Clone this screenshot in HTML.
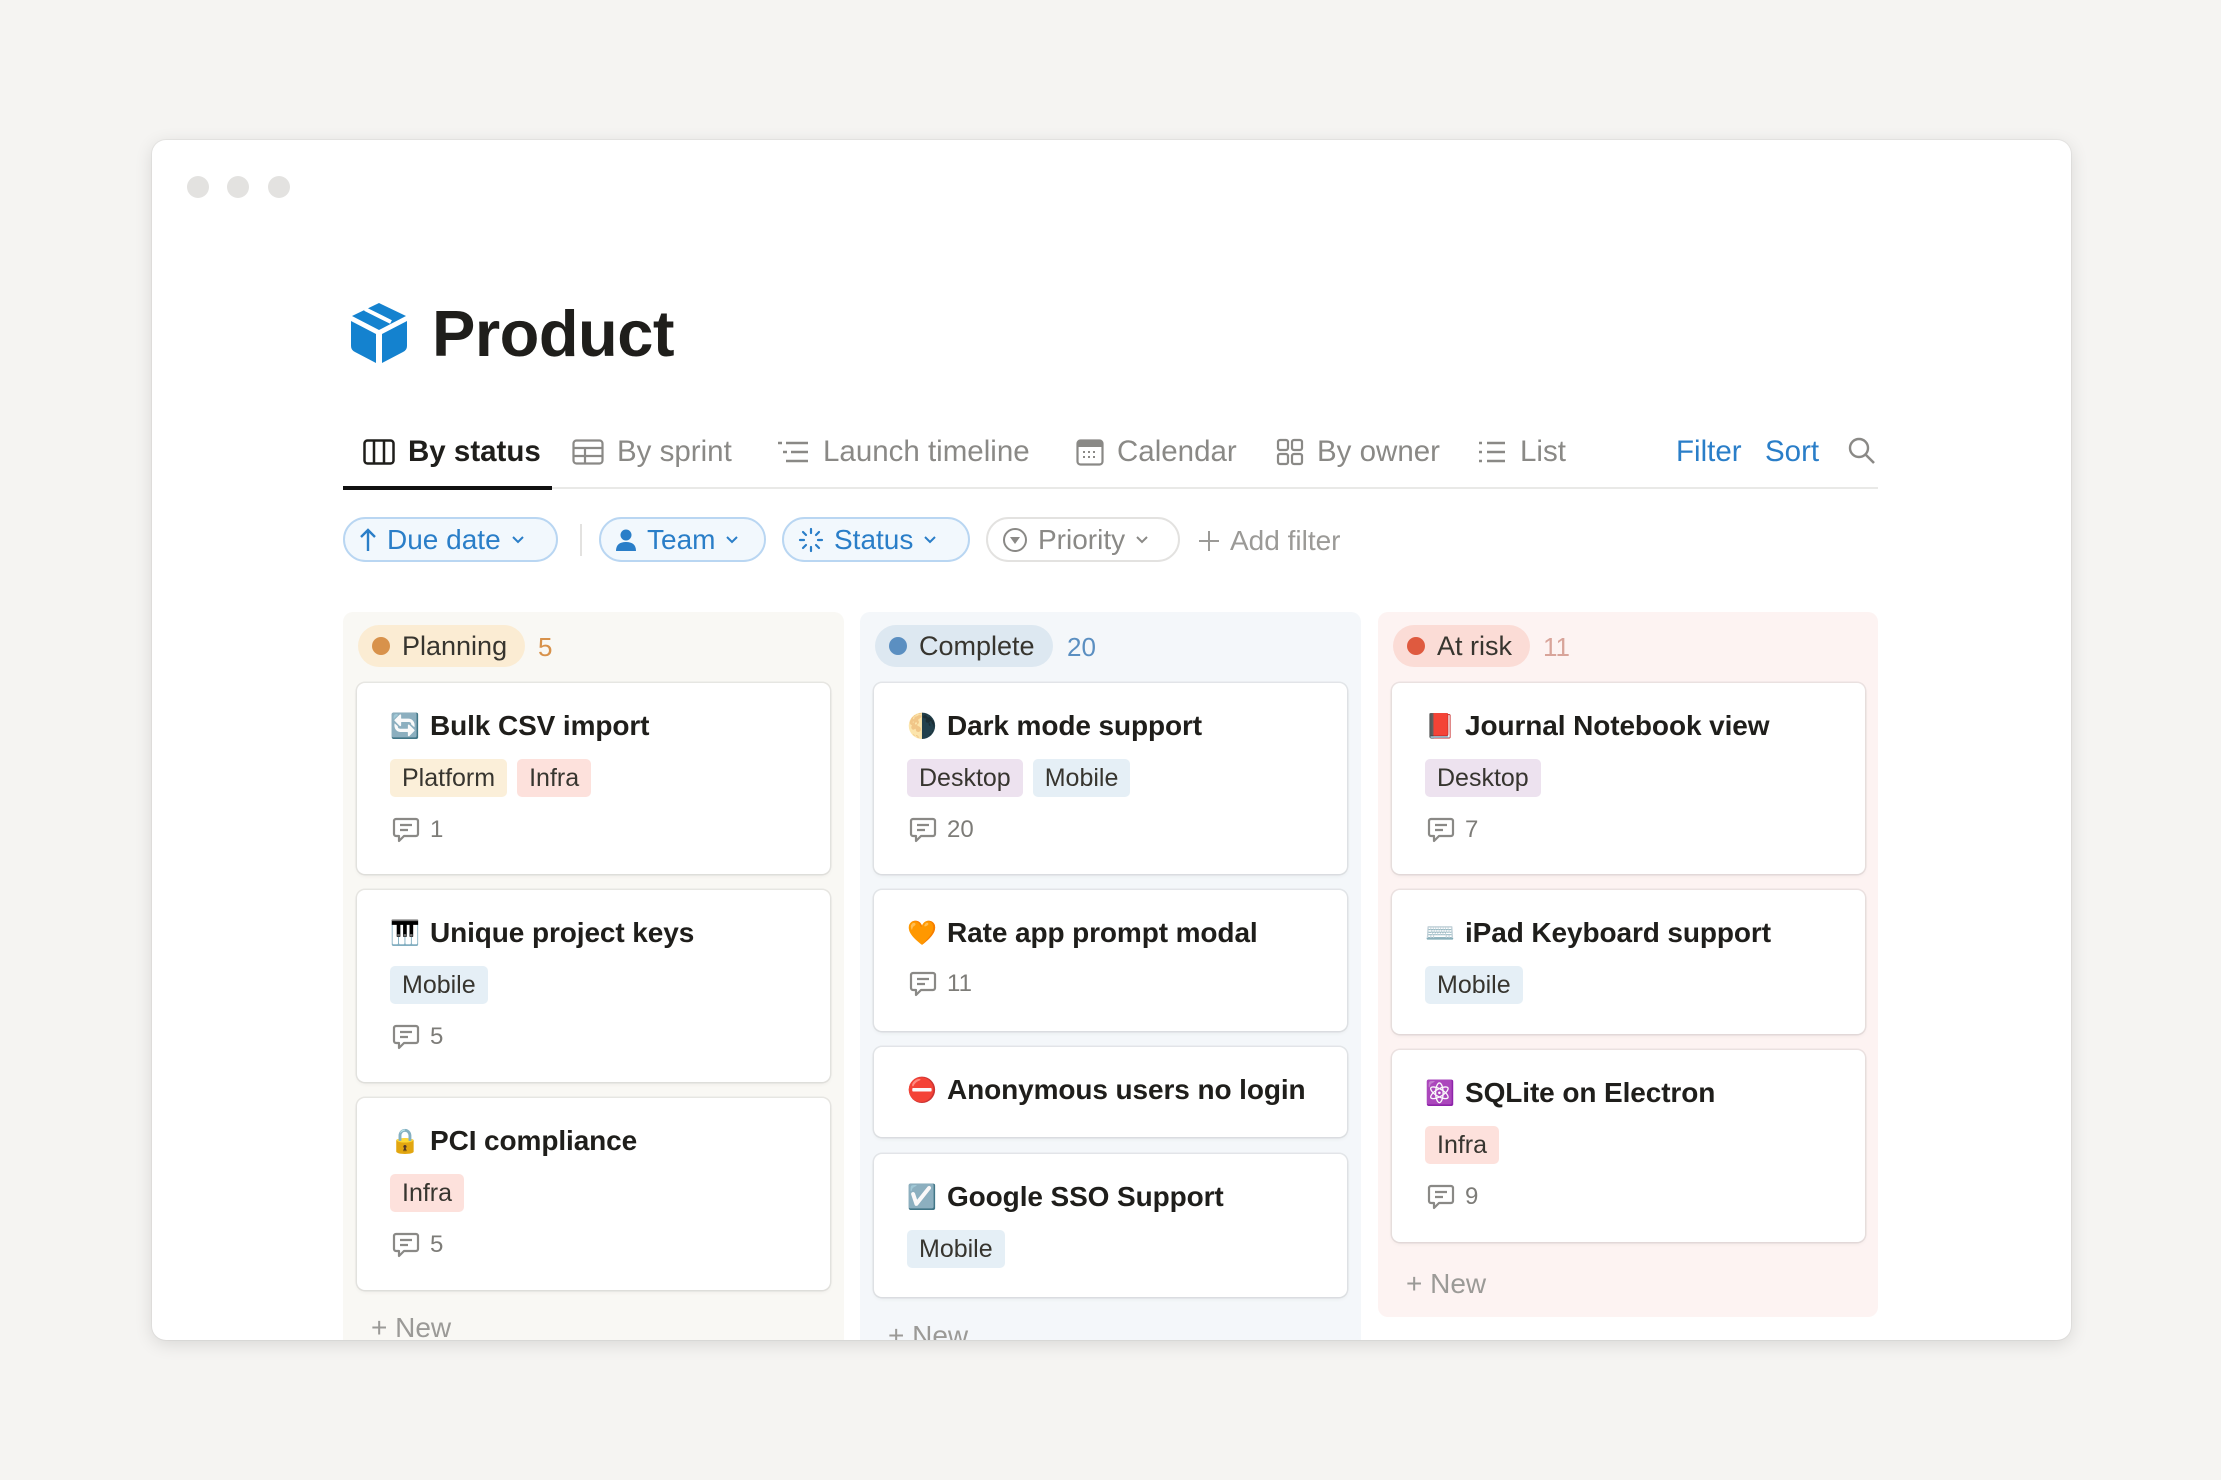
<!DOCTYPE html>
<html><head><meta charset="utf-8"><style>
*{box-sizing:border-box;margin:0;padding:0}
body{width:2221px;height:1480px;background:#f5f4f2;font-family:"Liberation Sans",sans-serif;position:relative;overflow:hidden}
.win{position:absolute;left:152px;top:140px;width:1919px;height:1200px;background:#fff;border-radius:14px;box-shadow:0 4px 18px rgba(0,0,0,.12),0 0 0 1px rgba(0,0,0,.04);overflow:hidden}
.a{position:absolute}
.dot{position:absolute;top:36px;width:22px;height:22px;border-radius:50%;background:#e3e2e0}
.tab{position:absolute;top:295px;font-size:29.5px;color:#8a8986;display:flex;align-items:center;gap:13px;white-space:nowrap}
.chip{position:absolute;top:377px;height:45px;border-radius:23px;border:2px solid #b9d6f2;background:#f2f8fd;color:#2a7ec8;font-size:28px;display:flex;align-items:center;padding:0 14px;gap:10px;white-space:nowrap}
.col{position:absolute;top:472px;border-radius:10px}
.pill{position:absolute;top:13px;left:15px;height:42px;border-radius:21px;display:flex;align-items:center;padding:0 18px 0 14px;gap:12px;font-size:27px;color:#37352f}
.pill i{width:18px;height:18px;border-radius:50%;display:block}
.cnt{position:absolute;top:20px;font-size:26px}
.card{position:absolute;left:14px;width:473px;background:#fff;border-radius:8px;box-shadow:0 0 0 1.5px rgba(15,15,15,.07),0 2px 4px rgba(15,15,15,.06)}
.t{position:absolute;left:33px;top:27px;font-size:28px;font-weight:bold;color:#1f1e1b;display:flex;align-items:center;gap:12px;white-space:nowrap;letter-spacing:-.1px}
.t span.e{width:28px;font-size:24px;text-align:center;font-weight:normal}
.tags{position:absolute;left:33px;top:76px;display:flex;gap:10px}
.tag{height:38px;line-height:38px;padding:0 12px;border-radius:5px;font-size:25px;color:#37352f}
.pl{background:#fbefd9}.in{background:#fde1dc}.de{background:#ede2ef}.mo{background:#e5eff6}
.cm{position:absolute;left:35px;font-size:24px;color:#7d7c78;display:flex;align-items:center;gap:10px}
.new{position:absolute;left:28px;font-size:28px;color:#9b9a97}
</style></head><body>
<svg width="0" height="0" style="position:absolute"><defs><symbol id="cb" viewBox="0 0 28 28"><path d="M4 3h20a2 2 0 0 1 2 2v13a2 2 0 0 1-2 2H12l-5 5v-5H4a2 2 0 0 1-2-2V5a2 2 0 0 1 2-2z" fill="none" stroke="#8a8986" stroke-width="2.2" stroke-linejoin="round"/><path d="M8 9h12M8 14h8" stroke="#8a8986" stroke-width="2.2"/></symbol></defs></svg>
<div class="win">
<div class="dot" style="left:35px"></div><div class="dot" style="left:75px"></div><div class="dot" style="left:116px"></div>

<svg class="a" style="left:197px;top:162px" width="60" height="62" viewBox="0 0 60 62">
<path d="M30 1 L57 14 L30 28 L3 14 Z" fill="#1482cf"/>
<path d="M16 7 L42 20" stroke="#fff" stroke-width="4"/>
<path d="M2 19 L27 32 L27 61 L6 50 Q2 48 2 44 Z" fill="#1482cf"/>
<path d="M58 19 L33 32 L33 61 L54 50 Q58 48 58 44 Z" fill="#1482cf"/>
</svg>
<div class="a" style="left:280px;top:156px;font-size:65px;font-weight:bold;color:#1f1e1b;letter-spacing:-.5px">Product</div>

<div class="tab" style="left:211px;color:#1f1e1b;font-weight:bold">
<svg width="32" height="26" viewBox="0 0 32 26"><rect x="1.5" y="1.5" width="29" height="23" rx="3" fill="none" stroke="#1f1e1b" stroke-width="2.5"/><path d="M11 2v22M21 2v22" stroke="#1f1e1b" stroke-width="2.5"/></svg>By status</div>
<div class="tab" style="left:420px"><svg width="32" height="26" viewBox="0 0 32 26"><rect x="1.5" y="1.5" width="29" height="23" rx="3" fill="none" stroke="#8a8986" stroke-width="2.2"/><path d="M2 9h28M2 17h28M13 9v15" stroke="#8a8986" stroke-width="2.2"/></svg>By sprint</div>
<div class="tab" style="left:624px"><svg width="34" height="24" viewBox="0 0 34 24"><path d="M2 3h4M10 3h22M7 12h4M15 12h17M10 21h22" stroke="#8a8986" stroke-width="2.4"/></svg>Launch timeline</div>
<div class="tab" style="left:924px"><svg width="28" height="28" viewBox="0 0 28 28"><rect x="1.5" y="2.5" width="25" height="24" rx="3" fill="none" stroke="#8a8986" stroke-width="2.2"/><rect x="2" y="3" width="24" height="6" fill="#8a8986"/><path d="M7 14h2M12 14h2M17 14h2M7 19h2M12 19h2M17 19h2" stroke="#8a8986" stroke-width="2"/></svg>Calendar</div>
<div class="tab" style="left:1124px"><svg width="28" height="28" viewBox="0 0 28 28"><rect x="2" y="2" width="10" height="10" rx="2" fill="none" stroke="#8a8986" stroke-width="2.2"/><rect x="16" y="2" width="10" height="10" rx="2" fill="none" stroke="#8a8986" stroke-width="2.2"/><rect x="2" y="16" width="10" height="10" rx="2" fill="none" stroke="#8a8986" stroke-width="2.2"/><rect x="16" y="16" width="10" height="10" rx="2" fill="none" stroke="#8a8986" stroke-width="2.2"/></svg>By owner</div>
<div class="tab" style="left:1325px"><svg width="30" height="24" viewBox="0 0 30 24"><path d="M2 3h3M10 3h18M2 12h3M10 12h18M2 21h3M10 21h18" stroke="#8a8986" stroke-width="2.4"/></svg>List</div>
<div class="tab" style="left:1524px;color:#2a7ec8">Filter</div>
<div class="tab" style="left:1613px;color:#2a7ec8">Sort</div>
<svg class="a" style="left:1695px;top:296px" width="30" height="30" viewBox="0 0 30 30"><circle cx="12" cy="12" r="9" fill="none" stroke="#8a8986" stroke-width="2.4"/><path d="M19 19l8 8" stroke="#8a8986" stroke-width="2.6"/></svg>
<div class="a" style="left:191px;top:347px;width:1535px;height:2px;background:#e9e9e7"></div>
<div class="a" style="left:191px;top:346px;width:209px;height:4px;background:#111"></div>

<div class="chip" style="left:191px;width:215px"><svg width="18" height="26" viewBox="0 0 18 26"><path d="M9 24V3M2 10l7-7 7 7" fill="none" stroke="#2a7ec8" stroke-width="2.4"/></svg>Due date<svg width="14" height="10" viewBox="0 0 14 10"><path d="M2 2l5 5 5-5" fill="none" stroke="#2a7ec8" stroke-width="2"/></svg></div>
<div class="a" style="left:428px;top:384px;width:2px;height:32px;background:#e3e2e0"></div>
<div class="chip" style="left:447px;width:167px"><svg width="22" height="24" viewBox="0 0 22 24"><circle cx="11" cy="7" r="5.5" fill="#2a7ec8"/><path d="M1 23q0-9 10-9t10 9z" fill="#2a7ec8"/></svg>Team<svg width="14" height="10" viewBox="0 0 14 10"><path d="M2 2l5 5 5-5" fill="none" stroke="#2a7ec8" stroke-width="2"/></svg></div>
<div class="chip" style="left:630px;width:188px"><svg width="26" height="26" viewBox="0 0 26 26" stroke="#2a7ec8" stroke-width="2.2" stroke-linecap="round"><path d="M13 2v4M13 20v4M2 13h4M20 13h4M5 5l3 3M18 18l3 3M5 21l3-3M18 8l3-3"/></svg>Status<svg width="14" height="10" viewBox="0 0 14 10"><path d="M2 2l5 5 5-5" fill="none" stroke="#2a7ec8" stroke-width="2"/></svg></div>
<div class="chip" style="left:834px;width:194px;border-color:#e3e2e0;background:#fff;color:#8a8986"><svg width="26" height="26" viewBox="0 0 26 26"><circle cx="13" cy="13" r="11" fill="none" stroke="#8a8986" stroke-width="2"/><path d="M8 10h10l-5 7z" fill="#8a8986"/></svg>Priority<svg width="14" height="10" viewBox="0 0 14 10"><path d="M2 2l5 5 5-5" fill="none" stroke="#8a8986" stroke-width="2"/></svg></div>
<div class="a" style="left:1046px;top:385px;font-size:28px;color:#9b9a97;display:flex;align-items:center;gap:10px"><svg width="22" height="22" viewBox="0 0 22 22"><path d="M11 1v20M1 11h20" stroke="#9b9a97" stroke-width="2"/></svg>Add filter</div>

<!-- Planning -->
<div class="col" style="left:191px;width:501px;height:760px;background:#f9f8f4">
<div class="pill" style="background:#fbecd3"><i style="background:#d8924b"></i>Planning</div>
<div class="cnt" style="left:195px;color:#d8924b">5</div>
<div class="card" style="top:71px;height:191px"><div class="t"><span class="e">🔄</span>Bulk CSV import</div><div class="tags"><div class="tag pl">Platform</div><div class="tag in">Infra</div></div><div class="cm" style="top:133px"><svg width="28" height="28"><use href="#cb"/></svg><span>1</span></div></div>
<div class="card" style="top:278px;height:192px"><div class="t"><span class="e">🎹</span>Unique project keys</div><div class="tags"><div class="tag mo">Mobile</div></div><div class="cm" style="top:133px"><svg width="28" height="28"><use href="#cb"/></svg><span>5</span></div></div>
<div class="card" style="top:486px;height:192px"><div class="t"><span class="e">🔒</span>PCI compliance</div><div class="tags"><div class="tag in">Infra</div></div><div class="cm" style="top:133px"><svg width="28" height="28"><use href="#cb"/></svg><span>5</span></div></div>
<div class="new" style="top:700px">+ New</div>
</div>

<!-- Complete -->
<div class="col" style="left:708px;width:501px;height:760px;background:#f4f7fa">
<div class="pill" style="background:#dde8f1"><i style="background:#5b8fc1"></i>Complete</div>
<div class="cnt" style="left:207px;color:#5b8fc1">20</div>
<div class="card" style="top:71px;height:191px"><div class="t"><span class="e">🌗</span>Dark mode support</div><div class="tags"><div class="tag de">Desktop</div><div class="tag mo">Mobile</div></div><div class="cm" style="top:133px"><svg width="28" height="28"><use href="#cb"/></svg><span>20</span></div></div>
<div class="card" style="top:278px;height:141px"><div class="t"><span class="e">🧡</span>Rate app prompt modal</div><div class="cm" style="top:80px"><svg width="28" height="28"><use href="#cb"/></svg><span>11</span></div></div>
<div class="card" style="top:435px;height:90px"><div class="t"><span class="e">⛔</span>Anonymous users no login</div></div>
<div class="card" style="top:542px;height:143px"><div class="t"><span class="e">☑️</span>Google SSO Support</div><div class="tags"><div class="tag mo">Mobile</div></div></div>
<div class="new" style="top:708px">+ New</div>
</div>

<!-- At risk -->
<div class="col" style="left:1226px;width:500px;height:705px;background:#fdf3f2">
<div class="pill" style="background:#fbdcd6"><i style="background:#df5a3f"></i>At risk</div>
<div class="cnt" style="left:165px;color:#d8a49a">11</div>
<div class="card" style="top:71px;height:191px"><div class="t"><span class="e">📕</span>Journal Notebook view</div><div class="tags"><div class="tag de">Desktop</div></div><div class="cm" style="top:133px"><svg width="28" height="28"><use href="#cb"/></svg><span>7</span></div></div>
<div class="card" style="top:278px;height:144px"><div class="t"><span class="e">⌨️</span>iPad Keyboard support</div><div class="tags"><div class="tag mo">Mobile</div></div></div>
<div class="card" style="top:438px;height:192px"><div class="t"><span class="e">⚛️</span>SQLite on Electron</div><div class="tags"><div class="tag in">Infra</div></div><div class="cm" style="top:133px"><svg width="28" height="28"><use href="#cb"/></svg><span>9</span></div></div>
<div class="new" style="top:656px">+ New</div>
</div>
</div>
</body></html>
